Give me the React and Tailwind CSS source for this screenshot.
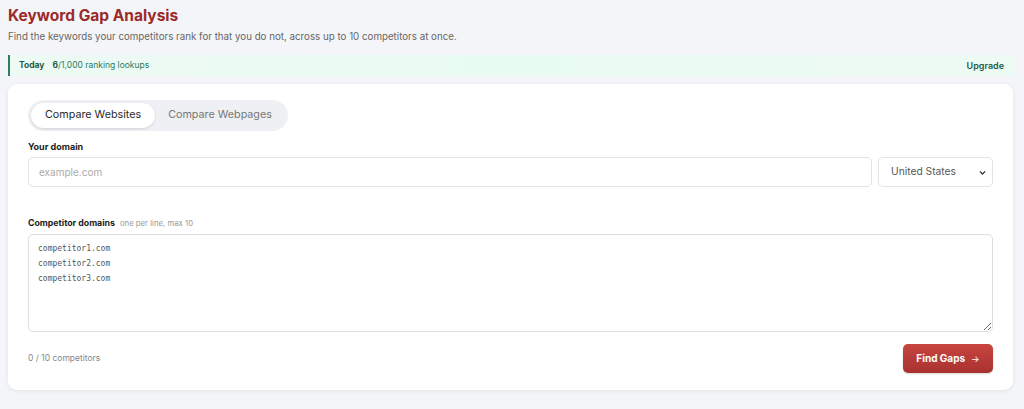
import { useState } from "react";

const font = { fontFamily: "Inter, 'Noto Sans', sans-serif" };

function ModeTabs({ mode, onChange }) {
  const tabs = ["Compare Websites", "Compare Webpages"];
  return (
    <div className="inline-flex items-center rounded-full bg-[#eef0f3] p-[3px]">
      {tabs.map((t) => (
        <button
          key={t}
          type="button"
          onClick={() => onChange(t)}
          className={
            mode === t
              ? "h-[25px] rounded-full bg-white px-[14px] text-[10.75px] text-[#2a2a2a] shadow-[0_1px_3px_rgba(0,0,0,0.12)]"
              : "h-[25px] rounded-full px-[13px] text-[10.75px] text-[#777]"
          }
        >
          {t}
        </button>
      ))}
    </div>
  );
}

export default function App() {
  const [mode, setMode] = useState("Compare Websites");
  const [domain, setDomain] = useState("");
  const [competitors, setCompetitors] = useState("");
  const count = competitors.split("\n").filter((l) => l.trim()).length;

  return (
    <div className="min-h-[409px] bg-[#f4f5f8] px-2 pt-[5px]" style={font}>
      <h1 className="text-[15.5px] font-bold leading-[22px] text-[#9b2a2a]">Keyword Gap Analysis</h1>
      <p className="mt-[3px] text-[9.75px] leading-[14px] text-[#666]">
        Find the keywords your competitors rank for that you do not, across up to 10 competitors at once.
      </p>

      {/* daily quota */}
      <div className="mt-[11px] flex h-[21px] items-center justify-between border-l-2 border-[#2f7d62] bg-gradient-to-r from-[#eefaf4] via-[#e8fbf1] to-[#eefaf4] pl-[9px] pr-[12px] text-[8.5px]">
        <div className="flex items-center gap-[8px] text-[#2b7a5e]">
          <span className="font-bold text-[#1f5c47]">Today</span>
          <span>
            <span className="font-bold text-[#1f5c47]">6</span>/1,000 ranking lookups
          </span>
        </div>
        <a href="#" className="text-[9px] font-semibold text-[#1f5c47]">Upgrade</a>
      </div>

      <div className="mt-[8px] mr-[3px] rounded-[9px] bg-white px-5 pt-[16px] pb-[17px] shadow-[0_1px_4px_rgba(0,0,0,0.08)]">
        <ModeTabs mode={mode} onChange={setMode} />

        <label className="mt-[10px] block text-[9px] font-bold leading-[12px] text-[#222]">Your domain</label>
        <div className="mt-[4px] flex gap-[6px]">
          <input
            value={domain}
            onChange={(e) => setDomain(e.target.value)}
            placeholder="example.com"
            className="h-[30px] flex-1 rounded-[5px] border border-[#e1e3e8] px-[10px] text-[10px] text-[#333] outline-none placeholder:text-[#aaa]"
          />
          <div className="relative w-[115px]">
            <select className="h-[30px] w-full appearance-none rounded-[5px] border border-[#e1e3e8] bg-white pl-[12px] text-[10.25px] text-[#555] outline-none">
              <option>United States</option>
              <option>United Kingdom</option>
              <option>Canada</option>
            </select>
            <svg viewBox="0 0 24 24" className="pointer-events-none absolute right-[6px] top-[11px] h-[9px] w-[9px] fill-none stroke-[#333] stroke-[3.5]">
              <path d="M5 9l7 7 7-7" />
            </svg>
          </div>
        </div>

        <label className="mt-[30px] flex items-baseline gap-[5px] text-[8.75px] font-bold leading-[12px] text-[#222]">
          Competitor domains
          <span className="text-[7.75px] font-normal text-[#999]">one per line, max 10</span>
        </label>
        <textarea
          value={competitors}
          onChange={(e) => setCompetitors(e.target.value)}
          placeholder={"competitor1.com\ncompetitor2.com\ncompetitor3.com"}
          className="mt-[5px] block h-[98px] w-full rounded-[5px] border border-[#dcdee3] px-[9px] py-[6px] text-[8px] leading-[15px] text-[#444] outline-none placeholder:text-[#555]"
          style={{ fontFamily: "'DejaVu Sans Mono', 'Liberation Mono', monospace" }}
        />

        <div className="mt-[12px] flex items-center justify-between">
          <span className="text-[8.5px] text-[#888]">{count} / 10 competitors</span>
          <button
            type="button"
            className="flex h-[29px] w-[90px] items-center justify-center gap-[6px] rounded-[5px] bg-gradient-to-b from-[#c8453f] to-[#a83230] text-[10px] font-bold text-white shadow-[0_1px_2px_rgba(0,0,0,0.15)]"
          >
            Find Gaps <span className="text-[9px] font-normal">→</span>
          </button>
        </div>
      </div>
    </div>
  );
}
